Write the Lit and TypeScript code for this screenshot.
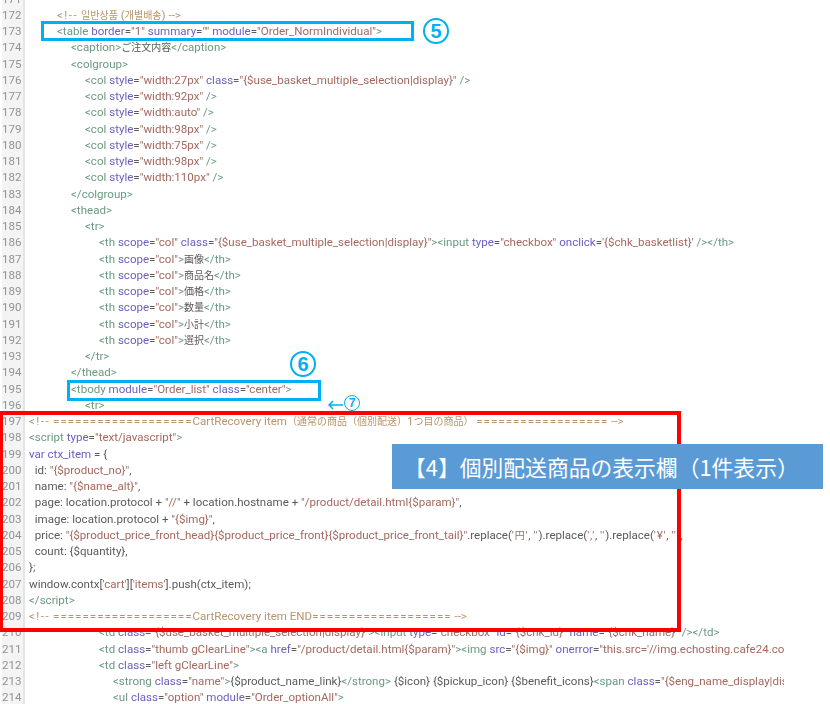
import { LitElement, html, css } from "lit";
import { customElement } from "lit/decorators.js";

type L = [number, string];
const EQ19 = "===================";
const EQ18 = "==================";
const LINES: L[] = [
  [2, ``],
  [2, `<!-- 일반상품 (개별배송) -->`],
  [2, `<table border="1" summary="" module="Order_NormIndividual">`],
  [3, `<caption>ご注文内容</caption>`],
  [3, `<colgroup>`],
  [4, `<col style="width:27px" class="{$use_basket_multiple_selection|display}" />`],
  [4, `<col style="width:92px" />`],
  [4, `<col style="width:auto" />`],
  [4, `<col style="width:98px" />`],
  [4, `<col style="width:75px" />`],
  [4, `<col style="width:98px" />`],
  [4, `<col style="width:110px" />`],
  [3, `</colgroup>`],
  [3, `<thead>`],
  [4, `<tr>`],
  [5, `<th scope="col" class="{$use_basket_multiple_selection|display}"><input type="checkbox" onclick='{$chk_basketlist}' /></th>`],
  [5, `<th scope="col">画像</th>`],
  [5, `<th scope="col">商品名</th>`],
  [5, `<th scope="col">価格</th>`],
  [5, `<th scope="col">数量</th>`],
  [5, `<th scope="col">小計</th>`],
  [5, `<th scope="col">選択</th>`],
  [4, `</tr>`],
  [3, `</thead>`],
  [3, `<tbody module="Order_list" class="center">`],
  [4, `<tr>`],
  [0, `<!-- ${EQ19}CartRecovery item（通常の商品（個別配送）1つ目の商品） ${EQ18} -->`],
  [0, `<script type="text/javascript">`],
  [0, `var ctx_item = {`],
  [0, `  id: "{$product_no}",`],
  [0, `  name: "{$name_alt}",`],
  [0, `  page: location.protocol + "//" + location.hostname + "/product/detail.html{$param}",`],
  [0, `  image: location.protocol + "{$img}",`],
  [0, `  price: "{$product_price_front_head}{$product_price_front}{$product_price_front_tail}".replace('円', '').replace(',', '').replace('¥', ''),`],
  [0, `  count: {$quantity},`],
  [0, `};`],
  [0, `window.contx['cart']['items'].push(ctx_item);`],
  [0, `</script>`],
  [0, `<!-- ${EQ19}CartRecovery item END${EQ19} -->`],
  [5, `<td class="{$use_basket_multiple_selection|display}"><input type="checkbox" id="{$chk_id}" name="{$chk_name}" /></td>`],
  [5, `<td class="thumb gClearLine"><a href="/product/detail.html{$param}"><img src="{$img}" onerror="this.src='//img.echosting.cafe24.com/thumb/img_product_small.gif';" /></a></td>`],
  [5, `<td class="left gClearLine">`],
  [6, `<strong class="name">{$product_name_link}</strong> {$icon} {$pickup_icon} {$benefit_icons}<span class="{$eng_name_display|display}">{$eng}</span>`],
  [6, `<ul class="option" module="Order_optionAll">`],
];

const CJK = /([\u3000-\u30ff\u3400-\u9fff\uac00-\ud7af\uff00-\uffef]+)/;

function cj(text: string) {
  return text
    .split(CJK)
    .map((p, i) => (i % 2 ? html`<span class="cjk">${p}</span>` : p));
}

function hl(src: string) {
  if (src.trimStart().startsWith("<!--")) {
    return html`<span class="cm">${src.split(/(=+|<!--)/).map((p) =>
      p.startsWith("=")
        ? html`<span class="eq">${p}</span>`
        : p === "<!--"
          ? html`<span class="op">${p}</span>`
          : cj(p)
    )}</span>`;
  }
  const re = /(<\/?[a-zA-Z]+|\/?>)|([\w-]+(?==))|("[^"]*"|'[^']*')|(\bvar\b)|(\bctx_item\b(?= =))/g;
  const out: unknown[] = [];
  let last = 0;
  let m: RegExpExecArray | null;
  while ((m = re.exec(src))) {
    if (m.index > last) out.push(cj(src.slice(last, m.index)));
    const short = m[3] && m[0][0] === "'" && m[0].length <= 3;
    const cls = m[1] ? "tg" : m[2] ? "at" : short ? "st sq" : m[3] ? "st" : "at";
    out.push(html`<span class=${cls}>${cj(m[0])}</span>`);
    last = m.index + m[0].length;
  }
  if (last < src.length) out.push(cj(src.slice(last)));
  return out;
}

@customElement("app-root")
export class AppRoot extends LitElement {
  static styles = css`
    :host {
      display: block;
      position: relative;
      width: 830px;
      height: 704px;
      overflow: hidden;
      background: #fff;
      font-family: "Roboto", "Noto Sans CJK JP", sans-serif;
    }
    .editor {
      width: 784px;
      height: 704px;
      overflow: hidden;
      filter: blur(0.55px);
    }
    .lines {
      margin-top: -9.4px;
    }
    .row {
      display: flex;
      height: 16.26px;
      line-height: 16.26px;
      font-size: 11.55px;
      white-space: pre;
    }
    .num {
      flex: none;
      width: 18px;
      margin-left: 2px;
      padding-right: 3px;
      text-align: right;
      color: #8f9498;
      background: #f4f4f4;
      border-right: 2px solid #e4e4e4;
      margin-right: 4px;
    }
    .code { color: #5a5a5a; }
    .tg { color: #6a9a80; }
    .at { color: #6a60c0; }
    .st { color: #a4685f; }
    .cm { color: #b8946c; }
    .eq { letter-spacing: 1px; }
    .op { letter-spacing: 1.5px; }
    .sq { letter-spacing: 0.8px; }
    .cjk {
      font-size: 10px;
      font-family: "Noto Sans CJK JP", sans-serif;
      line-height: 1;
    }
    .frame {
      position: absolute;
      box-sizing: border-box;
    }
    .blue { border: 3px solid #00b0f0; }
    .b5 { left: 41px; top: 21px; width: 373px; height: 20px; }
    .b6 { left: 67px; top: 380px; width: 254px; height: 21px; }
    .red { left: -1px; top: 411px; width: 682px; height: 221px; border: 4px solid #ff0000; }
    .mark {
      position: absolute;
      display: flex;
      align-items: center;
      justify-content: center;
      box-sizing: border-box;
      width: 26px;
      height: 26px;
      border: 2.5px solid #00b0f0;
      border-radius: 50%;
      background: #fff;
      color: #00b0f0;
      font-family: "Liberation Sans", sans-serif;
      font-size: 20px;
      font-weight: 700;
      line-height: 1;
    }
    .m5 { left: 423px; top: 18px; }
    .m6 { left: 290px; top: 351px; }
    .m7 { left: 344px; top: 395px; width: 16px; height: 16px; font-size: 12px; border-width: 1.5px; }
    .arrow { position: absolute; left: 328px; top: 400px; width: 15px; height: 10px; }
    .banner {
      position: absolute;
      left: 392px;
      top: 444px;
      width: 431px;
      height: 45px;
      box-sizing: border-box;
      padding-left: 12px;
      background: #5b9bd5;
      color: #fff;
      font-family: "Noto Sans CJK JP", sans-serif;
      font-size: 21.8px;
      line-height: 45px;
      white-space: nowrap;
      overflow: hidden;
    }
  `;

  render() {
    return html`
      <div class="editor">
        <div class="lines">
          ${LINES.map(
            ([lvl, src], i) => html`<div class="row">
              <span class="num">${171 + i}</span>
              <span class="code" style="padding-left:${lvl * 14}px">${hl(src)}</span>
            </div>`
          )}
        </div>
      </div>
      <div class="frame blue b5"></div>
      <div class="frame blue b6"></div>
      <div class="frame red"></div>
      <div class="mark m5">5</div>
      <div class="mark m6">6</div>
      <svg class="arrow" viewBox="0 0 15 10" fill="none" stroke="#00b0f0" stroke-width="1.5">
        <path d="M15 5H1M5 1L1 5l4 4" />
      </svg>
      <div class="mark m7">7</div>
      <div class="banner">【4】個別配送商品の表示欄（1件表示）</div>
    `;
  }
}
